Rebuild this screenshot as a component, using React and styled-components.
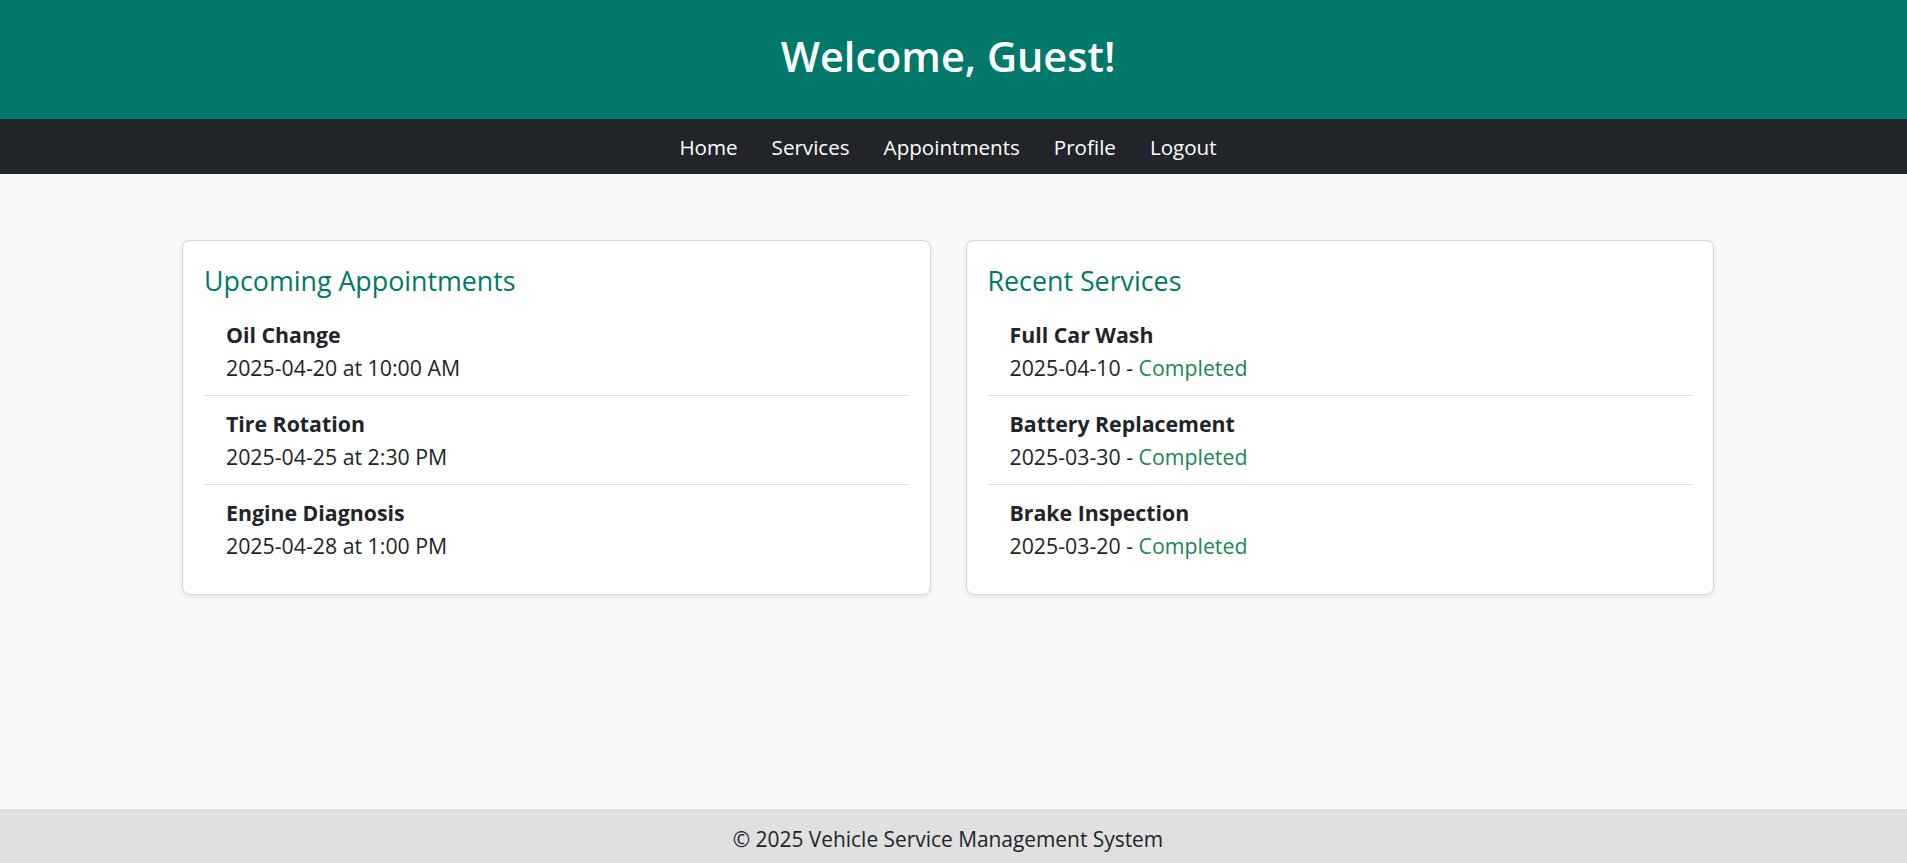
import styled, { createGlobalStyle } from "styled-components";

const GlobalStyle = createGlobalStyle`
  body {
    margin: 0;
    background: #f8f9fa;
    color: #212529;
    font-family: "Segoe UI", "Open Sans", "Noto Sans", sans-serif;
  }
  * {
    box-sizing: border-box;
  }
`;

// Page bands
const Header = styled.header`
  background-color: #00796b;
  color: #fff;
  text-align: center;
  padding: 31px 11px 38px 0;
`;

const Title = styled.h1`
  margin: 0;
  font-size: 41.5px;
  font-weight: 600;
  line-height: 50px;
`;

const Nav = styled.nav`
  background-color: #212529;
  display: flex;
  justify-content: center;
  padding: 13px 11px 12px 0;

  a {
    color: #fff;
    text-decoration: none;
    font-size: 20.6px;
    line-height: 30px;
    margin: 0 17px;
  }
`;

const Main = styled.main`
  min-height: 635px;
  padding: 66px 193px 0 182px;
`;

const Grid = styled.div`
  display: grid;
  grid-template-columns: 1fr 1fr;
  gap: 35px;
`;

const Card = styled.section`
  background: #fff;
  border: 1px solid #d6d8db;
  border-radius: 8px;
  box-shadow: 0 2px 5px rgba(0, 0, 0, 0.08);
  padding: 22px 21px 21px;
`;

const CardTitle = styled.h2`
  margin: 0 0 8px;
  font-size: 26.8px;
  font-weight: 500;
  line-height: 36px;
  color: #00796b;
`;

const List = styled.ul`
  list-style: none;
  margin: 0;
  padding: 0;
`;

const Item = styled.li`
  padding: 11px 22px;
  font-size: 21.3px;
  line-height: 33px;
  border-bottom: 1px solid #dee2e6;

  &:last-child {
    border-bottom: none;
  }
`;

const ItemName = styled.strong`
  display: block;
  font-weight: 700;
`;

const Status = styled.span`
  color: #198754;
`;

const Footer = styled.footer`
  background-color: #e0e0e0;
  text-align: center;
  font-size: 20.9px;
  line-height: 30px;
  padding: 15px 11px 15px 0;
`;

const appointments = [
  { name: "Oil Change", when: "2025-04-20 at 10:00 AM" },
  { name: "Tire Rotation", when: "2025-04-25 at 2:30 PM" },
  { name: "Engine Diagnosis", when: "2025-04-28 at 1:00 PM" },
];

const services = [
  { name: "Full Car Wash", date: "2025-04-10", status: "Completed" },
  { name: "Battery Replacement", date: "2025-03-30", status: "Completed" },
  { name: "Brake Inspection", date: "2025-03-20", status: "Completed" },
];

function App() {
  return (
    <>
      <GlobalStyle />
      <Header>
        <Title>Welcome, Guest!</Title>
      </Header>
      <Nav>
        <a href="#home">Home</a>
        <a href="#services">Services</a>
        <a href="#appointments">Appointments</a>
        <a href="#profile">Profile</a>
        <a href="#logout">Logout</a>
      </Nav>
      <Main>
        <Grid>
          <Card>
            <CardTitle>Upcoming Appointments</CardTitle>
            <List>
              {appointments.map((a) => (
                <Item key={a.name}>
                  <ItemName>{a.name}</ItemName>
                  {a.when}
                </Item>
              ))}
            </List>
          </Card>
          <Card>
            <CardTitle>Recent Services</CardTitle>
            <List>
              {services.map((s) => (
                <Item key={s.name}>
                  <ItemName>{s.name}</ItemName>
                  {s.date} - <Status>{s.status}</Status>
                </Item>
              ))}
            </List>
          </Card>
        </Grid>
      </Main>
      <Footer>© 2025 Vehicle Service Management System</Footer>
    </>
  );
}

export default App;
